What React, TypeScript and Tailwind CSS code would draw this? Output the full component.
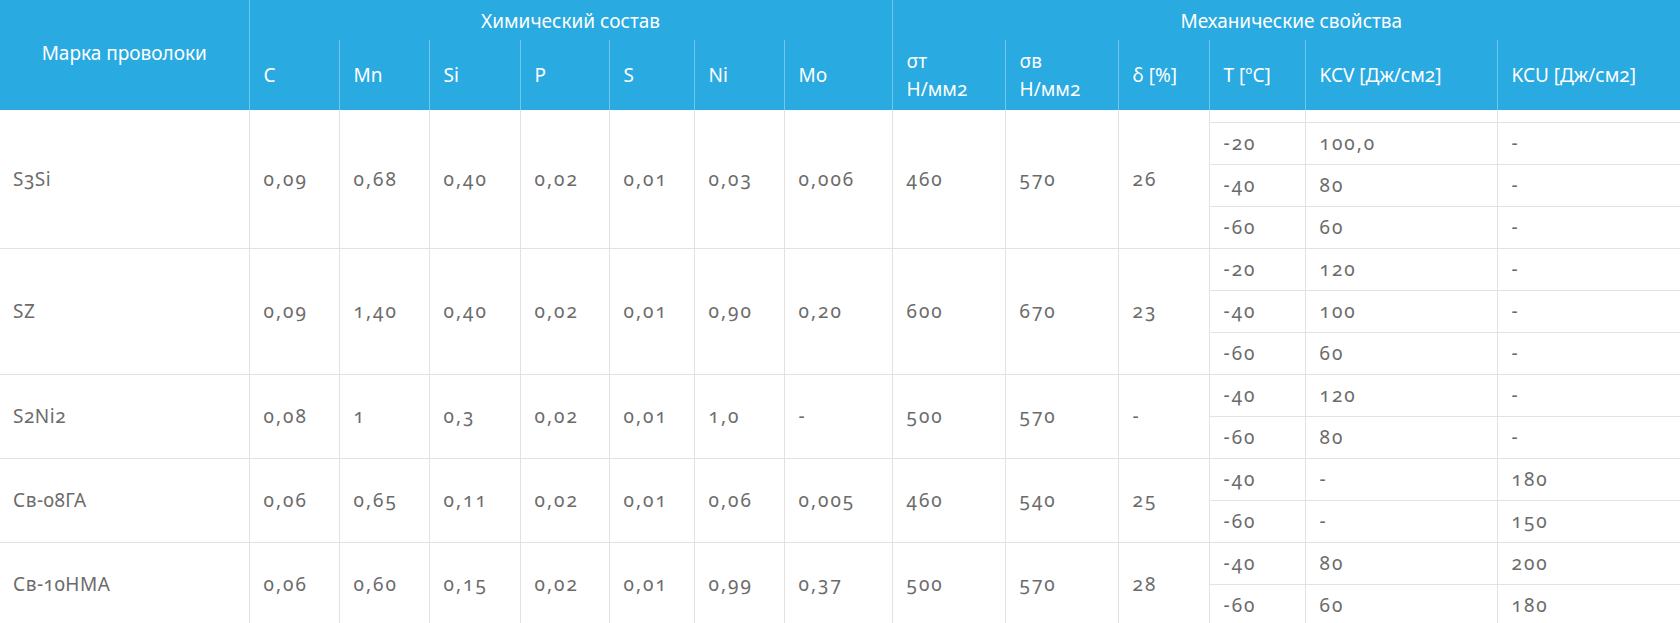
import React from 'react';

type Row = {
  name: string;
  chem: string[];
  st: string;
  sv: string;
  d: string;
  pad?: boolean;
  impact: string[][];
};

const rows: Row[] = [
  {
    name: 'S3Si',
    chem: ['0,09', '0,68', '0,40', '0,02', '0,01', '0,03', '0,006'],
    st: '460', sv: '570', d: '26', pad: true,
    impact: [['-20', '100,0', '-'], ['-40', '80', '-'], ['-60', '60', '-']],
  },
  {
    name: 'SZ',
    chem: ['0,09', '1,40', '0,40', '0,02', '0,01', '0,90', '0,20'],
    st: '600', sv: '670', d: '23',
    impact: [['-20', '120', '-'], ['-40', '100', '-'], ['-60', '60', '-']],
  },
  {
    name: 'S2Ni2',
    chem: ['0,08', '1', '0,3', '0,02', '0,01', '1,0', '-'],
    st: '500', sv: '570', d: '-',
    impact: [['-40', '120', '-'], ['-60', '80', '-']],
  },
  {
    name: 'Св-08ГА',
    chem: ['0,06', '0,65', '0,11', '0,02', '0,01', '0,06', '0,005'],
    st: '460', sv: '540', d: '25',
    impact: [['-40', '-', '180'], ['-60', '-', '150']],
  },
  {
    name: 'Св-10НМА',
    chem: ['0,06', '0,60', '0,15', '0,02', '0,01', '0,99', '0,37'],
    st: '500', sv: '570', d: '28',
    impact: [['-40', '80', '200'], ['-60', '60', '180']],
  },
];

const subHeads = ['C', 'Mn', 'Si', 'P', 'S', 'Ni', 'Mo'];

const th = 'border-r border-[#74c6ec] font-normal text-left align-middle pl-[14px]';
// digits in the original font run wider, hence the tracking on number cells
const td = 'border-r border-b border-[#e2e2e2] pl-[14px] align-middle tracking-[2px]';

function Impact({ cells }: { cells: string[] }) {
  return (
    <>
      <td className={td}>{cells[0]}</td>
      <td className={td}>{cells[1]}</td>
      <td className="border-b border-[#e2e2e2] pl-[14px] align-middle tracking-[2px]">{cells[2]}</td>
    </>
  );
}

export default function App() {
  return (
    <div className="w-[1680px] h-[623px] overflow-hidden bg-white font-['Noto_Sans','Open_Sans',sans-serif] text-[19px] oldstyle-nums">
      <table className="w-[1680px] table-fixed border-collapse">
        <colgroup>
          <col className="w-[249px]" />
          <col className="w-[90px]" />
          <col className="w-[90px]" />
          <col className="w-[91px]" />
          <col className="w-[89px]" />
          <col className="w-[85px]" />
          <col className="w-[90px]" />
          <col className="w-[108px]" />
          <col className="w-[113px]" />
          <col className="w-[113px]" />
          <col className="w-[91px]" />
          <col className="w-[96px]" />
          <col className="w-[192px]" />
          <col className="w-[183px]" />
        </colgroup>
        <thead className="bg-[#29aae1] text-white">
          <tr className="h-[40px]">
            <th rowSpan={2} className="border-r border-[#74c6ec] font-normal text-center align-middle pb-[4px]">
              Марка проволоки
            </th>
            <th colSpan={7} className="border-r border-[#74c6ec] font-normal text-center align-middle pt-[2px]">
              Химический состав
            </th>
            <th colSpan={6} className="font-normal text-center align-middle pt-[2px] pl-[10px]">
              Механические свойства
            </th>
          </tr>
          <tr className="h-[70px] leading-[28px]">
            {subHeads.map((h) => (
              <th key={h} className={th}>{h}</th>
            ))}
            <th className={th}>σт<br />Н/мм2</th>
            <th className={th}>σв<br />Н/мм2</th>
            <th className={th}>δ [%]</th>
            <th className={th}>T [ºC]</th>
            <th className={th}>KCV [Дж/см2]</th>
            <th className="font-normal text-left align-middle pl-[14px]">KCU [Дж/см2]</th>
          </tr>
        </thead>
        <tbody className="text-[#6b6b6b]">
          {rows.map((r) => {
            const span = r.impact.length + (r.pad ? 1 : 0);
            const left = (
              <>
                <td rowSpan={span} className="border-r border-b border-[#e2e2e2] pl-[13px] align-middle tracking-[0.5px]">{r.name}</td>
                {r.chem.map((c, i) => (
                  <td key={i} rowSpan={span} className={td}>{c}</td>
                ))}
                <td rowSpan={span} className={td}>{r.st}</td>
                <td rowSpan={span} className={td}>{r.sv}</td>
                <td rowSpan={span} className={td}>{r.d}</td>
              </>
            );
            return (
              <React.Fragment key={r.name}>
                {r.pad ? (
                  <tr className="h-[12px]">
                    {left}
                    <td className="border-r border-b border-[#e2e2e2] p-0" />
                    <td className="border-r border-b border-[#e2e2e2] p-0" />
                    <td className="border-b border-[#e2e2e2] p-0" />
                  </tr>
                ) : null}
                {r.impact.map((cells, i) => (
                  <tr key={i} className="h-[42px]">
                    {!r.pad && i === 0 ? left : null}
                    <Impact cells={cells} />
                  </tr>
                ))}
              </React.Fragment>
            );
          })}
        </tbody>
      </table>
    </div>
  );
}
